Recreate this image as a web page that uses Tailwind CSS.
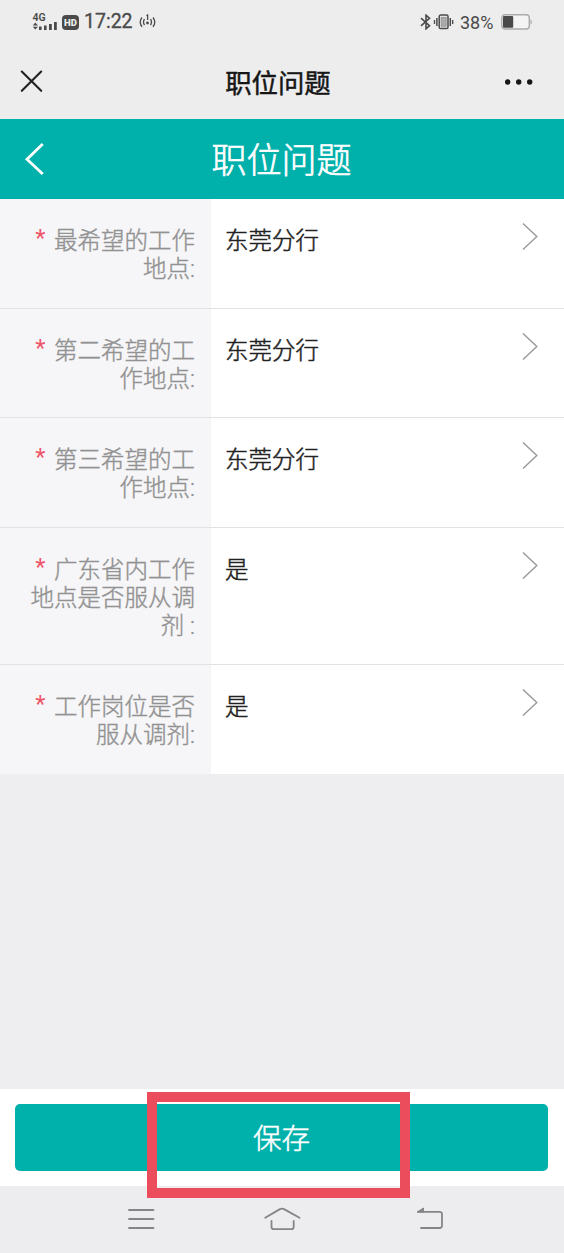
<!DOCTYPE html>
<html lang="zh-CN">
<head>
<meta charset="utf-8">
<title>职位问题</title>
<script src="https://cdn.jsdelivr.net/npm/@tailwindcss/browser@4"></script>
</head>
<body class="bg-[#eeeef0]">
<div class="w-[564px] h-[1253px] flex flex-col overflow-hidden bg-[#eeeef0] font-[Roboto,'Noto_Sans_CJK_SC',sans-serif] text-[#333]">
  <header class="h-[119px] shrink-0 bg-[#ededed]">
    <div class="h-[44px] flex items-center justify-between pl-[32px] pr-[32px] text-[#4a4a4a]">
      <div class="flex items-center">
        <svg class="w-[26px] h-[20px]" viewBox="0 0 26 20" fill="#4a4a4a">
          <text x="0.5" y="9" font-size="10.5" font-weight="600" font-family="Roboto">4G</text>
          <path d="M3.3 10.5 6 13.5H.8zM3.3 17.6 6 14.7H.8z"/>
          <rect x="7" y="14.500" width="2.600" height="3.500"/><rect x="12" y="13.500" width="2.600" height="4.500"/><rect x="17" y="12" width="2.800" height="6"/><rect x="22" y="10" width="2.800" height="8"/>
        </svg>
        <span class="ml-[4px] w-[17px] h-[15px] rounded-[4px] bg-[#4a4a4a] text-[#ededed] text-[9.5px] leading-[15px] font-black text-center">HD</span>
        <span class="ml-[5px] text-[19.5px] leading-[24px] [-webkit-text-stroke:0.3px_#4a4a4a]">17:22</span>
        <svg class="ml-[6px] w-[17px] h-[16px]" viewBox="0 0 17 16" fill="none" stroke="#4a4a4a" stroke-width="1.3">
          <path d="M3 3.5Q-.6 8 3 12.8M5.5 5.2Q3.5 8 5.5 11.2M14 3.5Q17.6 8 14 12.8M11.5 5.2Q13.5 8 11.5 11.2M7.5 1.8 8.6 1V6"/><circle cx="8.5" cy="9" r="1.4" fill="#4a4a4a" stroke="none"/>
        </svg>
      </div>
      <div class="flex items-center">
        <svg class="w-[12px] h-[16px]" viewBox="0 0 12 16" fill="none" stroke="#4a4a4a" stroke-width="1.6"><path d="M1 4.2 9.5 11.7 6 14.8V1.2L9.5 4.3 1 11.8"/></svg>
        <svg class="ml-[1px] w-[21px] h-[16px]" viewBox="0 0 21 16" fill="none" stroke="#4a4a4a"><rect x="6.2" y="1" width="8.8" height="13.6" rx="1.4" stroke-width="1.5"/><rect x="8" y="3.2" width="5.2" height="9.2" fill="#aaa" stroke="#888" stroke-width=".6"/><path d="M3.9 4v8M17.3 4v8" stroke-width="1.5"/><path d="M1.5 6v4M19.7 6v4" stroke-width="1.3"/></svg>
        <span class="ml-[6px] w-[36px] text-[18px] leading-[24px] pt-px whitespace-nowrap">38%</span>
        <svg class="ml-[5px] w-[31px] h-[16px]" viewBox="0 0 31 16"><rect x=".8" y=".8" width="27.5" height="14.2" rx="3" fill="#f4f4f4" stroke="#aaa" stroke-width="1.4"/><rect x="2" y="2" width="10.2" height="11.8" rx="1" fill="#4a4a4a"/><path d="M29.4 5.3Q31 5.3 31 8T29.4 10.7z" fill="#bbb"/></svg>
      </div>
    </div>
    <div class="h-[75px] grid grid-cols-3 items-center px-[20px]">
      <svg class="w-[23px] h-[23px]" viewBox="0 0 23 23" fill="none" stroke="#222" stroke-width="2.1" stroke-linecap="round"><path d="M1.8 1.5 21.2 20.8M21.2 1.5 1.8 20.8"/></svg>
      <h1 class="pt-[4px] pr-[8px] text-center text-[26.4px] leading-[36px] [-webkit-text-stroke:0.45px_#161616] text-[#161616] whitespace-nowrap">职位问题</h1>
      <svg class="justify-self-end mr-[10px] w-[30px] h-[8px]" viewBox="0 0 30 8" fill="#161616"><circle cx="3.7" cy="4" r="2.7"/><circle cx="14.7" cy="4" r="2.7"/><circle cx="25.7" cy="4" r="2.7"/></svg>
    </div>
  </header>

  <div class="h-[80px] shrink-0 bg-[#00b0ab] grid grid-cols-[50px_1fr_50px] items-center text-white">
    <svg class="ml-[24px] w-[22px] h-[34px]" viewBox="0 0 22 34" fill="none" stroke="#fff" stroke-width="2.8"><path d="M18.700 2 3 17.200 18.700 32"/></svg>
    <h2 class="pt-[5px] pr-px text-center text-[35px] leading-[44px] font-light [-webkit-text-stroke:0.6px_white]">职位问题</h2>
  </div>

  <main class="shrink-0 bg-white text-[23.5px] leading-[28.2px]">
    <div class="flex h-[109.5px] border-b border-[#e2e2e4]">
      <div class="w-[211px] bg-[#f6f6f8] pt-[28px] pr-[16px] text-right font-light text-[#929292] [-webkit-text-stroke:0.4px_#929292]"><span class="inline-block -translate-y-[3px] text-[#ee5568] font-normal mr-[3px] [-webkit-text-stroke:0px]">*</span> 最希望的工作<br>地点:</div>
      <div class="flex-1 pt-[28px] pl-[14px] text-[#222] font-light [-webkit-text-stroke:0.5px_#222]">东莞分行</div>
      <svg class="mt-[23px] mr-[25px] w-[18px] h-[29px]" viewBox="0 0 18 29" fill="none" stroke="#999" stroke-width="1.4"><path d="M2 1.5 15.8 14.5 2 27.5"/></svg>
    </div>
    <div class="flex h-[109.5px] border-b border-[#e2e2e4]">
      <div class="w-[211px] bg-[#f6f6f8] pt-[28px] pr-[16px] text-right font-light text-[#929292] [-webkit-text-stroke:0.4px_#929292]"><span class="inline-block -translate-y-[3px] text-[#ee5568] font-normal mr-[3px] [-webkit-text-stroke:0px]">*</span> 第二希望的工<br>作地点:</div>
      <div class="flex-1 pt-[28px] pl-[14px] text-[#222] font-light [-webkit-text-stroke:0.5px_#222]">东莞分行</div>
      <svg class="mt-[23px] mr-[25px] w-[18px] h-[29px]" viewBox="0 0 18 29" fill="none" stroke="#999" stroke-width="1.4"><path d="M2 1.5 15.8 14.5 2 27.5"/></svg>
    </div>
    <div class="flex h-[109.5px] border-b border-[#e2e2e4]">
      <div class="w-[211px] bg-[#f6f6f8] pt-[28px] pr-[16px] text-right font-light text-[#929292] [-webkit-text-stroke:0.4px_#929292]"><span class="inline-block -translate-y-[3px] text-[#ee5568] font-normal mr-[3px] [-webkit-text-stroke:0px]">*</span> 第三希望的工<br>作地点:</div>
      <div class="flex-1 pt-[28px] pl-[14px] text-[#222] font-light [-webkit-text-stroke:0.5px_#222]">东莞分行</div>
      <svg class="mt-[23px] mr-[25px] w-[18px] h-[29px]" viewBox="0 0 18 29" fill="none" stroke="#999" stroke-width="1.4"><path d="M2 1.5 15.8 14.5 2 27.5"/></svg>
    </div>
    <div class="flex h-[137.5px] border-b border-[#e2e2e4]">
      <div class="w-[211px] bg-[#f6f6f8] pt-[28px] pr-[16px] text-right font-light text-[#929292] [-webkit-text-stroke:0.4px_#929292]"><span class="inline-block -translate-y-[3px] text-[#ee5568] font-normal mr-[3px] [-webkit-text-stroke:0px]">*</span> 广东省内工作<br>地点是否服从调<br>剂 :</div>
      <div class="flex-1 pt-[28px] pl-[14px] text-[#222] font-light [-webkit-text-stroke:0.5px_#222]">是</div>
      <svg class="mt-[23px] mr-[25px] w-[18px] h-[29px]" viewBox="0 0 18 29" fill="none" stroke="#999" stroke-width="1.4"><path d="M2 1.5 15.8 14.5 2 27.5"/></svg>
    </div>
    <div class="flex h-[109px]">
      <div class="w-[211px] bg-[#f6f6f8] pt-[28px] pr-[16px] text-right font-light text-[#929292] [-webkit-text-stroke:0.4px_#929292]"><span class="inline-block -translate-y-[3px] text-[#ee5568] font-normal mr-[3px] [-webkit-text-stroke:0px]">*</span> 工作岗位是否<br>服从调剂:</div>
      <div class="flex-1 pt-[28px] pl-[14px] text-[#222] font-light [-webkit-text-stroke:0.5px_#222]">是</div>
      <svg class="mt-[23px] mr-[25px] w-[18px] h-[29px]" viewBox="0 0 18 29" fill="none" stroke="#999" stroke-width="1.4"><path d="M2 1.5 15.8 14.5 2 27.5"/></svg>
    </div>
  </main>

  <div class="flex-1"></div>

  <div class="relative h-[97px] shrink-0 bg-white px-[15px] pt-[15px]">
    <button class="block w-[533px] h-[67px] rounded-[5px] bg-[#00b0ab] text-center text-white text-[28.5px] leading-[67px] pt-[2px] font-light [-webkit-text-stroke:0.5px_white]">保存</button>
    <div class="absolute left-[147px] top-[3px] w-[263px] h-[106px] border-[10px] border-[#eb4d5c]"></div>
  </div>

  <nav class="h-[67px] shrink-0 bg-[#ededef] flex pt-[20px] pl-[127px]">
    <svg class="w-[28px] h-[24px]" viewBox="0 0 28 24" fill="none" stroke="#858587" stroke-width="1.8" stroke-linecap="round"><path d="M2 4h24.5M2 13h24.5M2 22h24.5"/></svg>
    <svg class="ml-[108px] w-[38px] h-[26px]" viewBox="0 0 38 26" fill="none" stroke="#858587" stroke-width="1.8" stroke-linecap="round" stroke-linejoin="round"><path d="M2.200 11.800 16.500 3.400Q19 2 21.500 3.400L36.500 11.800M8.500 15V21Q8.500 23.200 10.700 23.200H28.500Q30.700 23.200 30.700 21V15"/></svg>
    <svg class="ml-[115px] w-[29px] h-[25px]" viewBox="0 0 29 25" fill="none" stroke="#858587" stroke-width="1.8" stroke-linecap="round" stroke-linejoin="round"><path d="M5 22H23.500Q26 22 26 19.500V8Q26 5.800 23.500 5.800H2"/><path d="M1.500 5.800 7.500 2V5.800z" fill="#858587" stroke-width="1"/></svg>
  </nav>
</div>
</body>
</html>
